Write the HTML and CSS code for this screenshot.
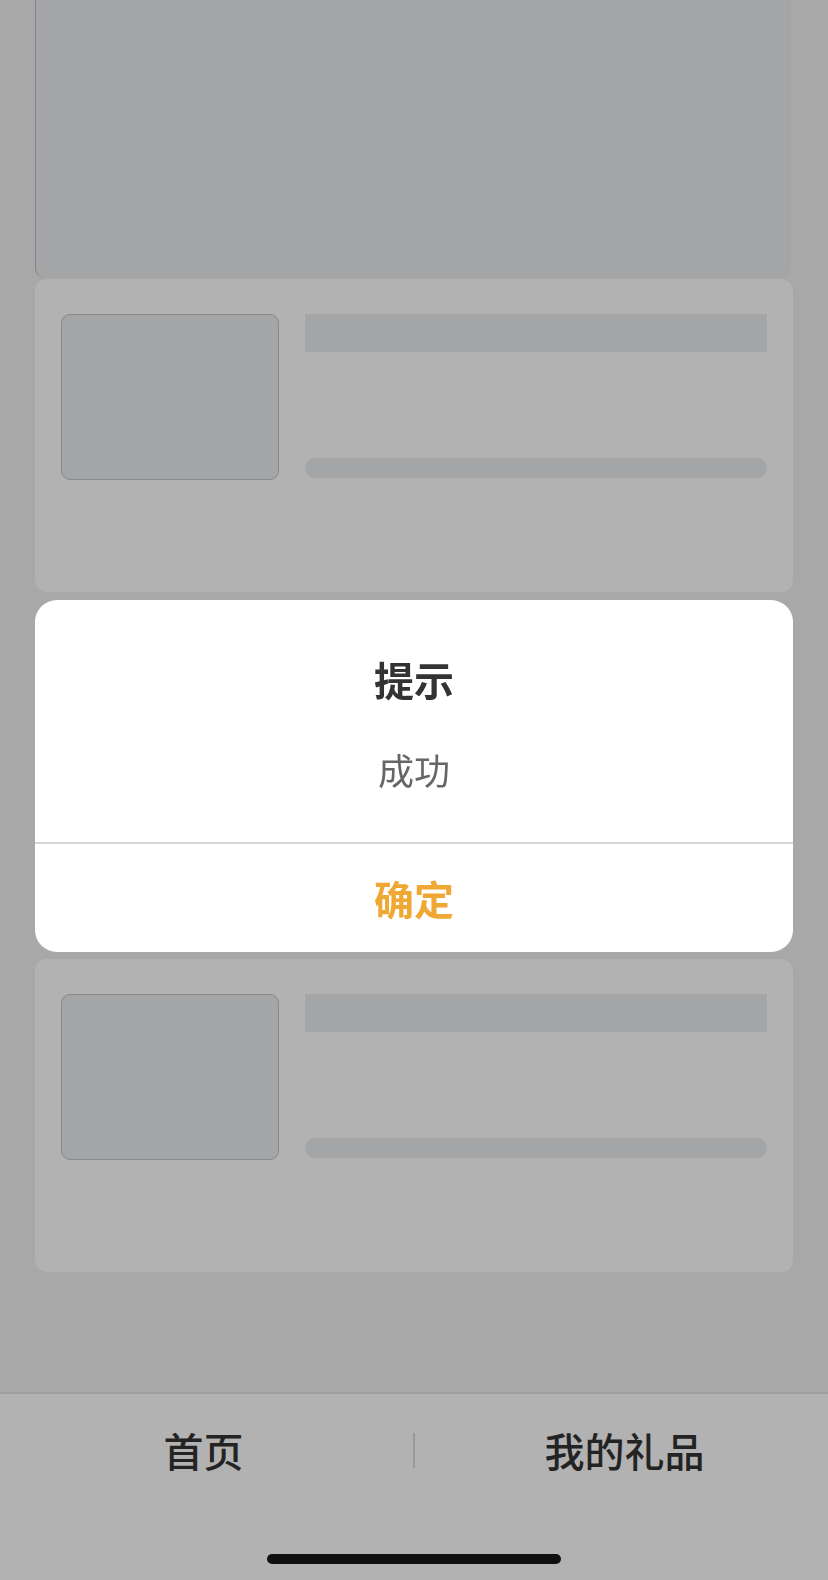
FILE: index.html
```html
<html>
  <head>
    <title>我的礼品</title>
    <meta charset="utf-8">
    <link rel="stylesheet" href="styles.css">
  </head>
  <body>
    <div class="page">
      <main class="content">
        <div class="banner"></div>
        <div class="gift-list">
          <div class="gift-card">
            <div class="gift-pic"></div>
            <div class="gift-info">
              <div class="gift-name"></div>
              <div class="gift-price"></div>
            </div>
          </div>
          <div class="gift-card">
            <div class="gift-pic"></div>
            <div class="gift-info">
              <div class="gift-name"></div>
              <div class="gift-price"></div>
            </div>
          </div>
          <div class="gift-card">
            <div class="gift-pic"></div>
            <div class="gift-info">
              <div class="gift-name"></div>
              <div class="gift-price"></div>
            </div>
          </div>
        </div>
      </main>
      <footer class="tabbar">
        <nav class="tabs">
          <a class="tab">首页</a>
          <span class="tab-sep"></span>
          <a class="tab">我的礼品</a>
        </nav>
        <div class="safe-area">
          <div class="home-bar"></div>
        </div>
      </footer>
    </div>

    <div class="mask"></div>
    <div class="dialog">
      <div class="dialog-body">
        <div class="dialog-title">提示</div>
        <div class="dialog-text">成功</div>
      </div>
      <div class="dialog-btn">确定</div>
    </div>
  </body>
</html>
```

FILE: styles.css
```css
:root {
  --page-bg: #f1f1f1;
  --card: #ffffff;
  --skeleton: #eaecef;
  --text: #333333;
  --accent: #f0a834;
}

body {
  margin: 0;
  background-color: var(--page-bg);
  font-family: "Noto Sans CJK SC", "Noto Sans", sans-serif;
  color: var(--text);
}

.page {
  height: 100vh;
  display: flex;
  flex-direction: column;
}

.content {
  flex: 1;
  overflow: hidden;
  padding: 0 35px;
}

.banner {
  height: 278px;
  margin-right: 2px;
  background-color: var(--skeleton);
  border-left: 1px solid #b8b9bc;
  border-radius: 0 0 10px 10px;
}

.gift-list {
  display: flex;
  flex-direction: column;
  gap: 27px;
  margin-top: 1px;
}
.gift-card {
  box-sizing: border-box;
  height: 313px;
  padding: 35px 26px 0 26px;
  background-color: var(--card);
  border-radius: 12px;
  display: flex;
  align-items: flex-start;
  gap: 26px;
}
.gift-pic {
  box-sizing: border-box;
  width: 218px;
  height: 166px;
  flex-shrink: 0;
  background-color: var(--skeleton);
  border: 1px solid #c2c3c6;
  border-radius: 9px;
}
.gift-info {
  flex: 1;
  height: 166px;
  box-sizing: border-box;
  padding-bottom: 2px;
  display: flex;
  flex-direction: column;
  justify-content: space-between;
}
.gift-name {
  height: 38px;
  background-color: var(--skeleton);
}
.gift-price {
  height: 20px;
  background-color: var(--skeleton);
  border-radius: 10px;
}

.tabbar {
  background-color: #ffffff;
  border-top: 2px solid #e4e4e4;
}
.tabs {
  height: 112px;
  display: flex;
  align-items: center;
}
.tab {
  flex: 1;
  text-align: center;
  font-size: 40px;
  line-height: 56px;
  font-weight: 500;
  color: var(--text);
}
.tab-sep {
  width: 2px;
  height: 35px;
  margin: 0 6px;
  background-color: #dcdcdc;
}
.safe-area {
  height: 74px;
  box-sizing: border-box;
  padding-top: 48px;
  display: flex;
  justify-content: center;
}
.home-bar {
  width: 294px;
  height: 10px;
  border-radius: 5px;
  background-color: #181818;
}

/* modal */
.mask {
  position: fixed;
  top: 0;
  left: 0;
  right: 0;
  bottom: 0;
  background-color: rgba(0, 0, 0, 0.3);
}
.dialog {
  position: fixed;
  top: 600px;
  left: 35px;
  right: 35px;
  background-color: #ffffff;
  border-radius: 22px;
  overflow: hidden;
  text-align: center;
}
.dialog-body {
  height: 244px;
  box-sizing: border-box;
  padding-top: 55px;
  border-bottom: 2px solid #d5d5d5;
}
.dialog-title {
  font-size: 40px;
  line-height: 48px;
  font-weight: bold;
  color: #333333;
}
.dialog-text {
  margin-top: 42px;
  font-size: 36px;
  line-height: 48px;
  color: #666666;
}
.dialog-btn {
  height: 108px;
  line-height: 108px;
  font-size: 40px;
  font-weight: bold;
  color: var(--accent);
}
```
